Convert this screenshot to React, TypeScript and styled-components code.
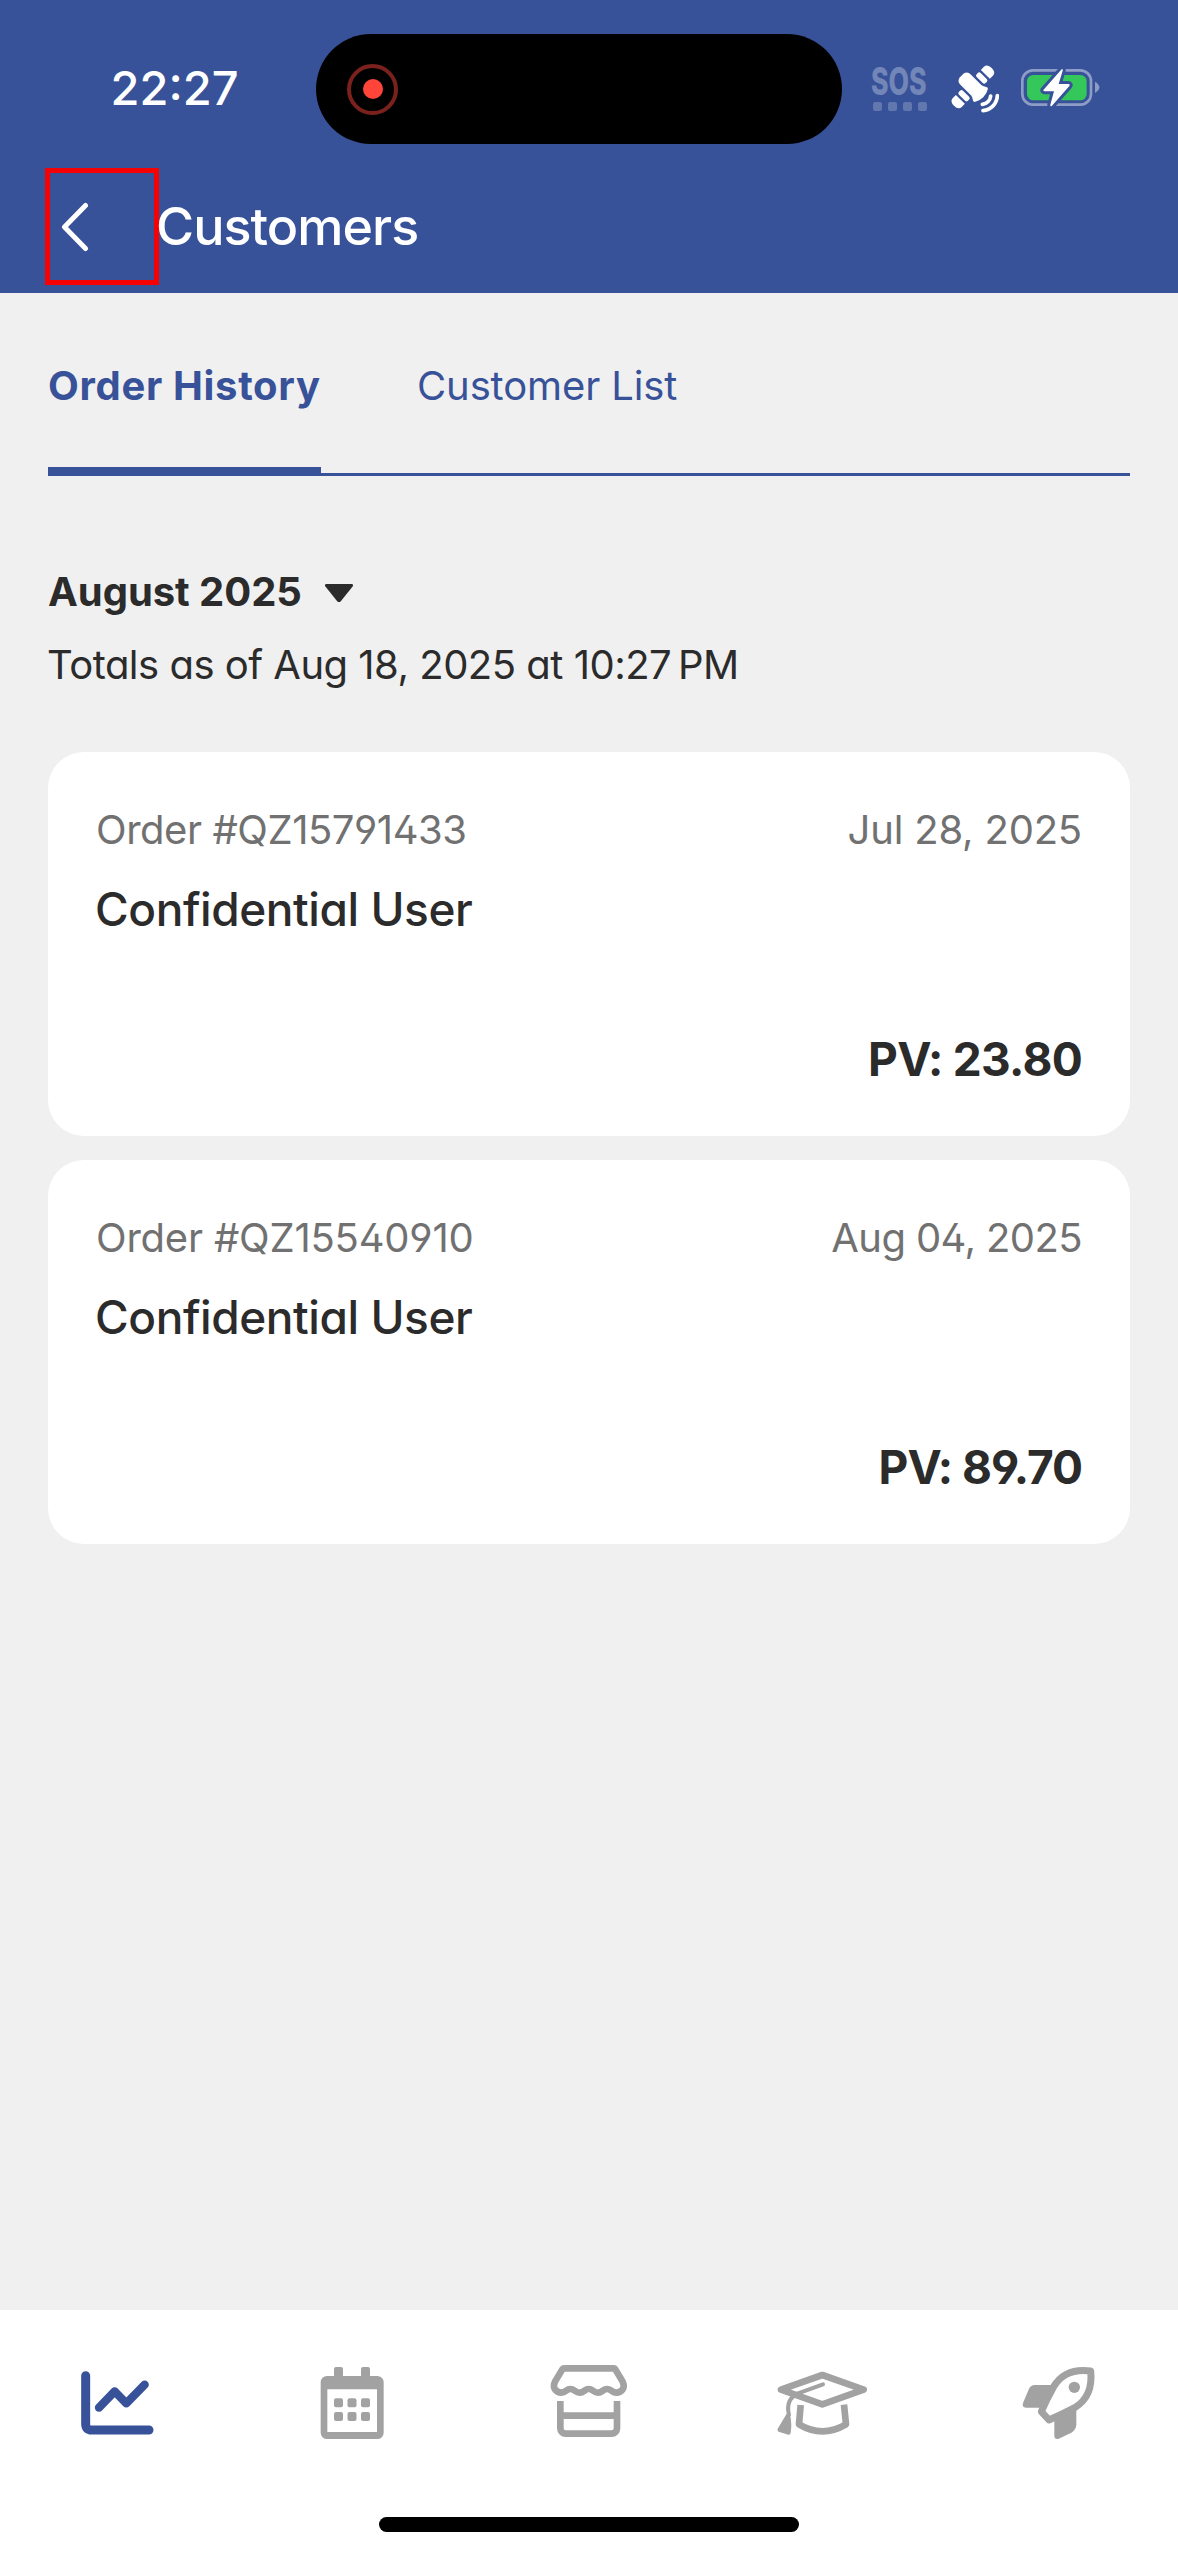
import React from "react";
import styled, { createGlobalStyle } from "styled-components";

const color = {
  brand: "#385299",
  ink: "#2b2b2b",
  muted: "#717171",
  page: "#f0f0f0",
  icon: "#a2a2a2",
};

const GlobalStyle = createGlobalStyle`
  *, *::before, *::after { box-sizing: border-box; }
  body {
    margin: 0;
    background: ${color.page};
    font-family: Inter, "Liberation Sans", sans-serif;
    font-feature-settings: "cv11", "cv02", "cv04";
  }
  button { font: inherit; font-feature-settings: inherit; border: 0; background: none; padding: 0; }
`;

const Screen = styled.div`
  display: flex;
  flex-direction: column;
  width: 1178px;
  height: 2556px;
  background: ${color.page};
`;

const Header = styled.header`
  height: 293px;
  background: ${color.brand};
  color: #fff;
`;

const StatusBar = styled.div`
  display: grid;
  grid-template-columns: 316px 526px 1fr;
  align-items: center;
  height: 168px;
  padding-top: 10px;
`;

const Clock = styled.time`
  padding: 0 0 3px 110.5px;
  font-size: 47px;
  font-weight: 500;
`;

const Island = styled.div`
  display: flex;
  align-items: center;
  height: 110px;
  padding-left: 31px;
  border-radius: 55px;
  background: #000;
`;

const RecordRing = styled.span`
  display: grid;
  place-items: center;
  width: 51px;
  height: 51px;
  border: 4px solid #7b211d;
  border-radius: 50%;
`;

const RecordDot = styled.span`
  width: 20px;
  height: 20px;
  border-radius: 50%;
  background: #ff443a;
`;

const StatusIcons = styled.div`
  display: flex;
  align-items: center;
  gap: 15px;
  padding-left: 30px;
  svg { display: block; flex: none; }
`;

const Sos = styled.div`
  display: flex;
  flex-direction: column;
  flex: none;
  width: 57px;
  height: 64px;
  color: #7286b7;
`;

const SosLabel = styled.span`
  width: max-content;
  margin-left: -1px;
  font-size: 38px;
  font-weight: 800;
  line-height: 48px;
  transform: scaleX(0.7);
  transform-origin: left center;
`;

const SosDots = styled.div`
  display: flex;
  gap: 6px;
  margin: -3px 0 0 1px;
`;

const SosDot = styled.span`
  width: 9px;
  height: 9px;
  border-radius: 2px;
  background: #6177ae;
`;

const TitleRow = styled.div`
  display: flex;
  align-items: center;
  height: 116px;
  padding-left: 45px;
`;

const BackButton = styled.button`
  display: flex;
  align-items: center;
  width: 114px;
  height: 117px;
  padding: 1px 0 0 11px !important;
  border: 5px solid #f60204 !important;
  color: #fff;
`;

const Title = styled.h1`
  margin: 2px 0 0 -3px;
  font-size: 52px;
  font-weight: 500;
  letter-spacing: -0.95px;
  line-height: 116px;
`;

const Main = styled.main`
  flex: 1;
  padding: 0 48px;
  color: ${color.ink};
`;

const TabList = styled.nav`
  display: flex;
  gap: 96px;
  height: 183px;
  box-shadow: inset 0 -3px ${color.brand};
`;

const Tab = styled.button<{ $active?: boolean }>`
  display: flex;
  height: 183px;
  padding-top: 62px;
  border-bottom: ${(p) => (p.$active ? `9px solid ${color.brand}` : "0")};
  width: ${(p) => (p.$active ? "273px" : "auto")};
  color: ${color.brand};
  font-size: 40px;
  font-weight: ${(p) => (p.$active ? 700 : 400)};
  letter-spacing: ${(p) => (p.$active ? 0.68 : -0.12)}px;
  line-height: 61px;
  white-space: nowrap;
`;

const Period = styled.button`
  display: flex;
  align-items: center;
  gap: 22px;
  margin-top: 86px;
  color: ${color.ink};
  font-size: 40px;
  font-weight: 700;
  letter-spacing: -0.05px;
  line-height: 60px;
  svg { margin-top: 3px; }
`;

const Totals = styled.p`
  margin: 13px 0 57px -1px;
  font-size: 40px;
  letter-spacing: -0.5px;
  line-height: 60px;
`;

const CardList = styled.div`
  display: flex;
  flex-direction: column;
  gap: 24px;
`;

const Card = styled.article`
  height: 384px;
  padding: 48px 48px 0;
  border-radius: 36px;
  background: #fff;
`;

const CardMeta = styled.div`
  display: flex;
  justify-content: space-between;
  color: ${color.muted};
  font-size: 40px;
  line-height: 59px;
`;

const Tracked = styled.span<{ $spacing: number }>`
  letter-spacing: ${(p) => p.$spacing}px;
`;

const CustomerName = styled.h2`
  margin: 20px 0 89px -1px;
  font-size: 46px;
  font-weight: 500;
  letter-spacing: -0.43px;
  line-height: 61px;
`;

const Volume = styled.p`
  margin: 0;
  font-size: 46px;
  font-weight: 700;
  line-height: 61px;
  text-align: right;
`;

const BottomBar = styled.footer`
  height: 246px;
  padding-top: 45px;
  background: #fff;
`;

const NavRow = styled.nav`
  display: grid;
  grid-template-columns: repeat(5, 1fr);
  justify-items: center;
`;

const NavButton = styled.button<{ $active?: boolean }>`
  width: 96px;
  height: 96px;
  color: ${(p) => (p.$active ? color.brand : color.icon)};
  svg { display: block; width: 96px; height: 96px; }
`;

const HomeIndicator = styled.div`
  width: 420px;
  height: 15px;
  margin: 66px auto 0;
  border-radius: 8px;
  background: #000;
`;

const SosSignal = () => (
  <Sos>
    <SosLabel>SOS</SosLabel>
    <SosDots>
      {[0, 1, 2, 3].map((i) => <SosDot key={i} />)}
    </SosDots>
  </Sos>
);

const SatelliteIcon = () => (
  <svg width="60" height="60" viewBox="0 -3 180 180" fill="none">
    <g transform="translate(88 82) rotate(-45)" fill="#fff">
      <path d="M-9-50H9Q22-46 22-34V12Q22 18 27 24Q32 31 28 34Q16 42 0 42T-28 34Q-32 31-27 24Q-22 18-22 12V-34Q-22-46-9-50Z" />
      <rect x="29" y="-21" width="17" height="38" rx="6" />
      <path d="M53-21H66Q80-21 80-2T66 17H53Z" />
      <rect x="-46" y="-21" width="17" height="38" rx="6" />
      <path d="M-53-21H-66Q-80-21-80-2T-66 17H-53Z" />
    </g>
    <path d="M140 108A28 28 0 0 1 115 133M160 107A47 47 0 0 1 117 152" stroke="#fff" strokeWidth="11" strokeLinecap="round" />
  </svg>
);

const BatteryIcon = () => (
  <svg width="84" height="46" viewBox="0 3 252 138" fill="none">
    <rect x="10" y="16" width="206" height="103" rx="32" stroke="#8e9dc6" strokeWidth="8" />
    <rect x="24" y="30" width="179" height="76" rx="19" fill="#34c759" />
    <path d="M228 50Q241 58 241 67T228 84Z" fill="#8e9dc6" />
    <path d="M128 13L73 75Q72 79 78 79H105L94 119Q93 127 99 122L151 63Q154 57 148 57H119L131 17Q132 9 128 13Z" fill="#fff" stroke={color.brand} strokeWidth="18" strokeLinejoin="round" paintOrder="stroke" />
  </svg>
);

const ChevronIcon = () => (
  <svg width="28" height="50" viewBox="0 0 28 50" fill="none" stroke="currentColor" strokeWidth="5" strokeLinecap="round" strokeLinejoin="round">
    <path d="M24.500 3.500L3.500 25L24.500 46.500" />
  </svg>
);

const CaretIcon = () => (
  <svg width="30" height="20" viewBox="0 0 30 20" fill={color.ink}>
    <path d="M2.500 0H27.500Q30 .3 28.600 2.500L16.800 17.200Q15 19 13.200 17.200L1.400 2.500Q0 .3 2.500 0Z" />
  </svg>
);

const ChartIcon = () => (
  <svg viewBox="0 0 288 288" fill="none" stroke="currentColor" strokeLinecap="round" strokeLinejoin="round">
    <path d="M47 62V207Q47 225 65 225H237" strokeWidth="27" />
    <path d="M87 158L134 109L169 145L224 89" strokeWidth="25" />
  </svg>
);

const CalendarIcon = () => (
  <svg viewBox="0 0 288 288" fill="currentColor">
    <path fillRule="evenodd" d="M66 63H217A19 19 0 0 1 236 82V233A19 19 0 0 1 217 252H66A19 19 0 0 1 47 233V82A19 19 0 0 1 66 63ZM67 103V231H216V103Z" />
    <path d="M87 66V42Q87 36 93 36H108Q114 36 114 42V66ZM168 66V42Q168 36 174 36H189Q195 36 195 42V66Z" />
    {[130, 171].map((y) => [87, 127.500, 168].map((x) => <rect key={`${x}-${y}`} x={x} y={y} width="27" height="27" rx="6" />))}
  </svg>
);

const StoreIcon = () => (
  <svg viewBox="0 0 288 288" fill="none" stroke="currentColor" strokeWidth="20" strokeLinejoin="round">
    <path d="M70 40H218Q221 40 223 43L245 80C254 98 242 113 226 113C213 113 210 102 198 102C186 102 184 113 171 113C158 113 156 102 143 102C131 102 129 113 116 113C103 113 101 102 88 102C76 102 75 113 61 113C45 113 33 98 42 80L64 43Q66 40 70 40Z" />
    <path d="M58 138V220A16 16 0 0 0 74 236H212A16 16 0 0 0 228 220V138M58 182H228" />
  </svg>
);

const AcademyIcon = () => (
  <svg viewBox="0 0 288 288" fill="none" stroke="currentColor" strokeWidth="20" strokeLinejoin="round">
    <path d="M136 60L260 104L136 148L12 104Z" />
    <path d="M71 150L66 208Q136 250 207 208L201 149" />
    <path d="M138 88L63 115C40 126 28 148 36 180" strokeWidth="12" strokeLinecap="round" />
    <path d="M29 176L3 220Q-1 227 5 230L34 239Q40 240 41 233Q46 202 38 176Z" fill="currentColor" stroke="none" />
  </svg>
);

const RocketIcon = () => (
  <svg viewBox="0 0 288 288" fill="currentColor">
    <path d="M236 48C190 42 151 52 125 95Q104 132 88 170L111 195Q150 178 188 158C228 134 241 94 236 48Z" fill="none" stroke="currentColor" strokeWidth="21" strokeLinejoin="round" />
    <circle cx="187" cy="97" r="17" />
    <path d="M120 90H68Q57 90 51 101L33 144Q29 158 42 158H88Z" />
    <path d="M127 196V243Q128 255 140 251L178 233Q193 224 193 208V160Z" />
  </svg>
);

const orders = [
  { id: "QZ15791433", date: "Jul 28, 2025", name: "Confidential User", pv: "23.80", idSpace: -0.45, dateSpace: -0.2, pvSpace: -0.7 },
  { id: "QZ15540910", date: "Aug 04, 2025", name: "Confidential User", pv: "89.70", idSpace: -0.2, dateSpace: -0.6, pvSpace: -1.0 },
];

const navItems = [
  { label: "Business", Icon: ChartIcon, active: true },
  { label: "Calendar", Icon: CalendarIcon },
  { label: "Shop", Icon: StoreIcon },
  { label: "Academy", Icon: AcademyIcon },
  { label: "Launch", Icon: RocketIcon },
];

export default function App() {
  return (
    <>
      <GlobalStyle />
      <Screen>
        <Header>
          <StatusBar>
            <Clock>22:27</Clock>
            <Island>
              <RecordRing><RecordDot /></RecordRing>
            </Island>
            <StatusIcons>
              <SosSignal />
              <SatelliteIcon />
              <BatteryIcon />
            </StatusIcons>
          </StatusBar>
          <TitleRow>
            <BackButton><ChevronIcon /></BackButton>
            <Title>Customers</Title>
          </TitleRow>
        </Header>
        <Main>
          <TabList>
            <Tab $active>Order History</Tab>
            <Tab>Customer List</Tab>
          </TabList>
          <Period>August 2025 <CaretIcon /></Period>
          <Totals>Totals as of Aug 18, 2025 at 10:27{"\u202f"}PM</Totals>
          <CardList>
            {orders.map((o) => (
              <Card key={o.id}>
                <CardMeta>
                  <Tracked $spacing={o.idSpace}>Order #{o.id}</Tracked>
                  <Tracked $spacing={o.dateSpace}>{o.date}</Tracked>
                </CardMeta>
                <CustomerName>{o.name}</CustomerName>
                <Volume><Tracked $spacing={o.pvSpace}>PV: {o.pv}</Tracked></Volume>
              </Card>
            ))}
          </CardList>
        </Main>
        <BottomBar>
          <NavRow>
            {navItems.map(({ label, Icon, active }) => (
              <NavButton key={label} $active={active}><Icon /></NavButton>
            ))}
          </NavRow>
          <HomeIndicator />
        </BottomBar>
      </Screen>
    </>
  );
}
